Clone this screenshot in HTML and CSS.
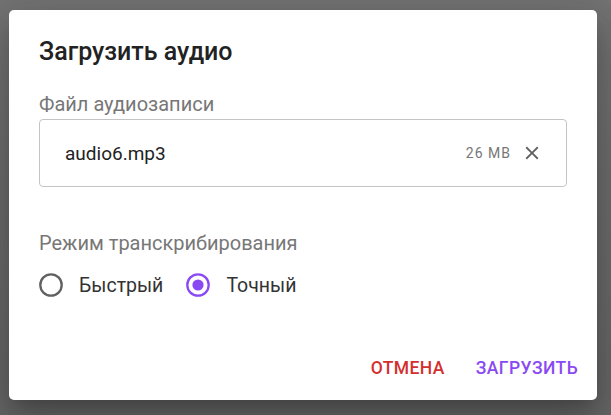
FILE: index.html
```html
<!DOCTYPE html>
<html lang="ru">
<head>
<meta charset="utf-8">
<title>Загрузить аудио</title>
<link rel="stylesheet" href="styles.css">
</head>
<body>
<div class="backdrop">
  <div class="dialog">
    <div class="content">
      <h2 class="title">Загрузить аудио</h2>
      <div class="label">Файл аудиозаписи</div>
      <div class="file-box">
        <span class="file-name">audio6.mp3</span>
        <span class="file-size">26 MB</span>
        <svg class="close" viewBox="0 0 24 24" width="22" height="22"><path d="M19 6.41 17.59 5 12 10.59 6.41 5 5 6.41 10.59 12 5 17.59 6.41 19 12 13.41 17.59 19 19 17.59 13.41 12z"/></svg>
      </div>
      <div class="label mode-label">Режим транскрибирования</div>
      <div class="radios">
        <label class="radio">
          <svg class="radio-icon" viewBox="0 0 24 24" width="24" height="24"><circle cx="12" cy="12" r="10.7" fill="none" stroke="#616161" stroke-width="2.3"/></svg>
          <span>Быстрый</span>
        </label>
        <label class="radio">
          <svg class="radio-icon" viewBox="0 0 24 24" width="24" height="24"><circle cx="12" cy="12" r="10.7" fill="none" stroke="#8a4af3" stroke-width="2.3"/><circle cx="12" cy="12" r="5.6" fill="#8a4af3"/></svg>
          <span>Точный</span>
        </label>
      </div>
    </div>
    <div class="actions">
      <button class="btn btn-cancel">Отмена</button>
      <button class="btn btn-upload">Загрузить</button>
    </div>
  </div>
</div>
</body>
</html>
```
FILE: styles.css
```css
html, body {
  margin: 0;
  padding: 0;
  height: 100%;
}
body {
  font-family: Roboto, "Noto Sans", sans-serif;
  background: #6e6e6e;
}
.backdrop {
  height: 100%;
  padding: 10px 0 0 9px;
  box-sizing: border-box;
  background: linear-gradient(180deg, #737373 0%, #666 100%);
}
.dialog {
  width: 588px;
  height: 390px;
  background: #fff;
  border-radius: 5px;
  box-shadow: 0 11px 15px -7px rgba(0,0,0,0.2), 0 24px 38px 3px rgba(0,0,0,0.14), 0 9px 46px 8px rgba(0,0,0,0.12);
  display: flex;
  flex-direction: column;
  box-sizing: border-box;
}
.content {
  padding: 30px 30px 0;
  flex: 1;
}
.title {
  margin: 0;
  font-size: 25px;
  font-weight: 500;
  line-height: 24px;
  color: #222;
}
.label {
  margin-top: 30px;
  font-size: 20px;
  line-height: 20px;
  color: #777;
}
.file-box {
  margin-top: 5px;
  height: 68px;
  box-sizing: border-box;
  border: 1px solid #c4c4c4;
  border-radius: 4px;
  display: flex;
  align-items: center;
  padding: 0 23px 0 25px;
}
.file-name {
  flex: 1;
  font-size: 19px;
  color: #222;
}
.file-size {
  font-size: 14px;
  letter-spacing: 1px;
  color: #777;
  margin-right: 10px;
}
.close {
  fill: #616161;
}
.mode-label {
  margin-top: 46px;
}
.radios {
  margin-top: 20px;
  display: flex;
  gap: 23px;
}
.radio {
  display: flex;
  align-items: center;
  gap: 16px;
  font-size: 19.5px;
  color: #333;
  height: 24px;
}
.radio-icon {
  display: block;
}
.actions {
  display: flex;
  justify-content: flex-end;
  gap: 31px;
  padding: 0 19px 22px;
}
.btn {
  background: none;
  border: 0;
  padding: 0;
  font-family: inherit;
  font-size: 17.5px;
  font-weight: 500;
  line-height: 20px;
  text-transform: uppercase;
  letter-spacing: 0.4px;
}
.btn-cancel { color: #d32f2f; }
.btn-upload { color: #8a4af3; }
```
